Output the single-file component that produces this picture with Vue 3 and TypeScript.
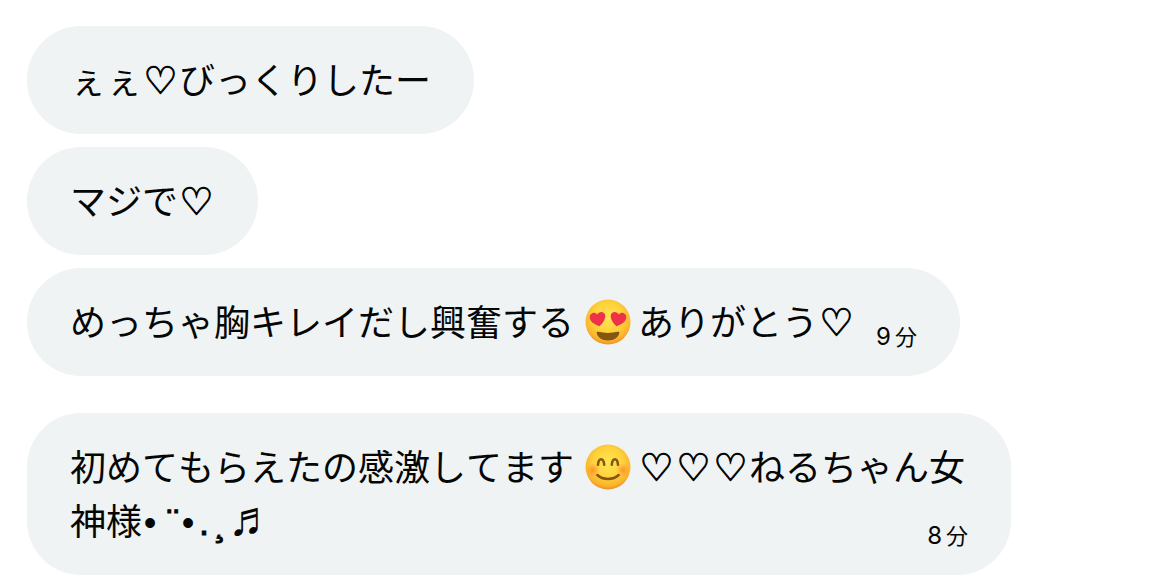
<script setup lang="ts">
type Kind = 'text' | 'heart' | 'love' | 'smile' | 'dot' | 'mark' | 'umlaut' | 'note'
interface Part {
  kind: Kind
  value: string
}
interface Message {
  id: number
  parts: Part[]
  minutes?: number
}

const part = (kind: Kind, value: string): Part => ({ kind, value })
const text = (value: string): Part => part('text', value)
const heart: Part = part('heart', '♡')

const messages: Message[] = [
  { id: 1, parts: [text('ぇぇ'), heart, text('びっくりしたー')] },
  { id: 2, parts: [text('マジで'), heart] },
  {
    id: 3,
    parts: [text('めっちゃ胸キレイだし興奮する'), part('love', '😍'), text('ありがとう'), heart],
    minutes: 9,
  },
  {
    id: 4,
    parts: [
      text('初めてもらえたの感激してます'),
      part('smile', '😊'),
      heart,
      heart,
      heart,
      text('ねるちゃん女'),
      text('神様'),
      part('dot', '•'),
      part('umlaut', '¨'),
      part('dot', '•'),
      part('mark', '.'),
      part('mark', '¸'),
      part('note', '♬'),
    ],
    minutes: 8,
  },
]
</script>

<template>
  <main class="chat">
    <article v-for="m in messages" :key="m.id" class="bubble">
      <template v-for="(p, i) in m.parts" :key="i">
        <svg v-if="p.kind === 'love' || p.kind === 'smile'" class="emoji" viewBox="0 0 46 46" role="img" :aria-label="p.value">
          <defs>
            <radialGradient :id="'face' + m.id" cx="50%" cy="40%" r="60%">
              <stop offset="0" stop-color="#ffe552" />
              <stop offset="0.55" stop-color="#fed23c" />
              <stop offset="0.85" stop-color="#fbb52b" />
              <stop offset="1" stop-color="#ee9224" />
            </radialGradient>
            <radialGradient :id="'blush' + m.id">
              <stop offset="0" stop-color="#ff7a30" stop-opacity="0.7" />
              <stop offset="1" stop-color="#ff8a30" stop-opacity="0" />
            </radialGradient>
          </defs>
          <circle cx="23" cy="23" r="22.5" :fill="`url(#face${m.id})`" />
          <template v-if="p.kind === 'love'">
            <path d="M14.600 27.200C9.500 25.800 4.600 22.300 4.700 18c.1-4.300 5.400-5.800 7.500-2.500 1.900-4 8-3.200 8.100 1.300.1 3.800-2.700 7.600-5.700 10.400z" fill="#ee3349" />
            <path d="M31.400 27.200c5.100-1.400 10-4.900 9.900-9.200-.1-4.300-5.400-5.800-7.500-2.500-1.900-4-8-3.200-8.100 1.300-.1 3.800 2.700 7.600 5.700 10.400z" fill="#ee3349" />
            <path d="M11.600 33.600c0-1 .9-1.100 2-.8 6 1.500 12.800 1.500 18.800 0 1.100-.3 2-.2 2 .8-.5 4.700-5.200 8-11.400 8s-10.900-3.300-11.400-8z" fill="#855611" />
          </template>
          <template v-else>
            <circle cx="8" cy="26" r="7" :fill="`url(#blush${m.id})`" />
            <circle cx="38" cy="26" r="7" :fill="`url(#blush${m.id})`" />
            <path d="M13 20.800c.6-7.400 5.600-7.400 6.200 0M26.800 20.800c.6-7.400 5.600-7.400 6.200 0M12.300 31c5.400 5.200 16 5.200 21.400 0" fill="none" stroke="#855611" stroke-width="2.500" stroke-linecap="round" />
          </template>
        </svg>
        <span v-else :class="p.kind">{{ p.value }}</span>
      </template>
      <time v-if="m.minutes" class="time" :datetime="`PT${m.minutes}M`"><span class="count">{{ m.minutes }}</span><span>分</span></time>
    </article>
  </main>
</template>

<style>
body {
  margin: 0;
  background: #fff;
}
</style>

<style scoped>
.chat {
  display: flex;
  flex-direction: column;
  align-items: flex-start;
  gap: 13px;
  padding: 26px 159px 6px 27px;
}

.bubble {
  box-sizing: border-box;
  max-width: 100%;
  padding: 29px 43px 25px;
  border-radius: 54px;
  background: #eff3f4;
  color: #050606;
  font: 36px/54px "Liberation Sans", "Noto Sans CJK JP", sans-serif;
  font-kerning: none;
}

.bubble:last-child {
  margin-top: 24px;
}

.emoji {
  display: inline-block;
  width: 46px;
  height: 46px;
  margin: 0 7px 0 11px;
  vertical-align: -9px;
}

.heart,
.dot,
.umlaut,
.mark,
.note {
  display: inline-block;
  line-height: 36px;
  text-align: center;
}

.heart {
  width: 37px;
  font-family: "DejaVu Sans", sans-serif;
  font-size: 38px;
}

.heart,
.umlaut,
.mark {
  -webkit-text-stroke: 1px currentColor;
}

.dot,
.mark {
  width: 16px;
}

.umlaut {
  width: 14px;
  margin-left: 8px;
}

.note {
  width: 36px;
  font-size: 48px;
}

.time {
  display: flex;
  float: right;
  align-items: baseline;
  gap: 4px;
  margin-left: 21px;
  padding-top: 28px;
  font-size: 22px;
  line-height: 24px;
}

.count {
  font-family: Inter, sans-serif;
  font-size: 24px;
}
</style>
